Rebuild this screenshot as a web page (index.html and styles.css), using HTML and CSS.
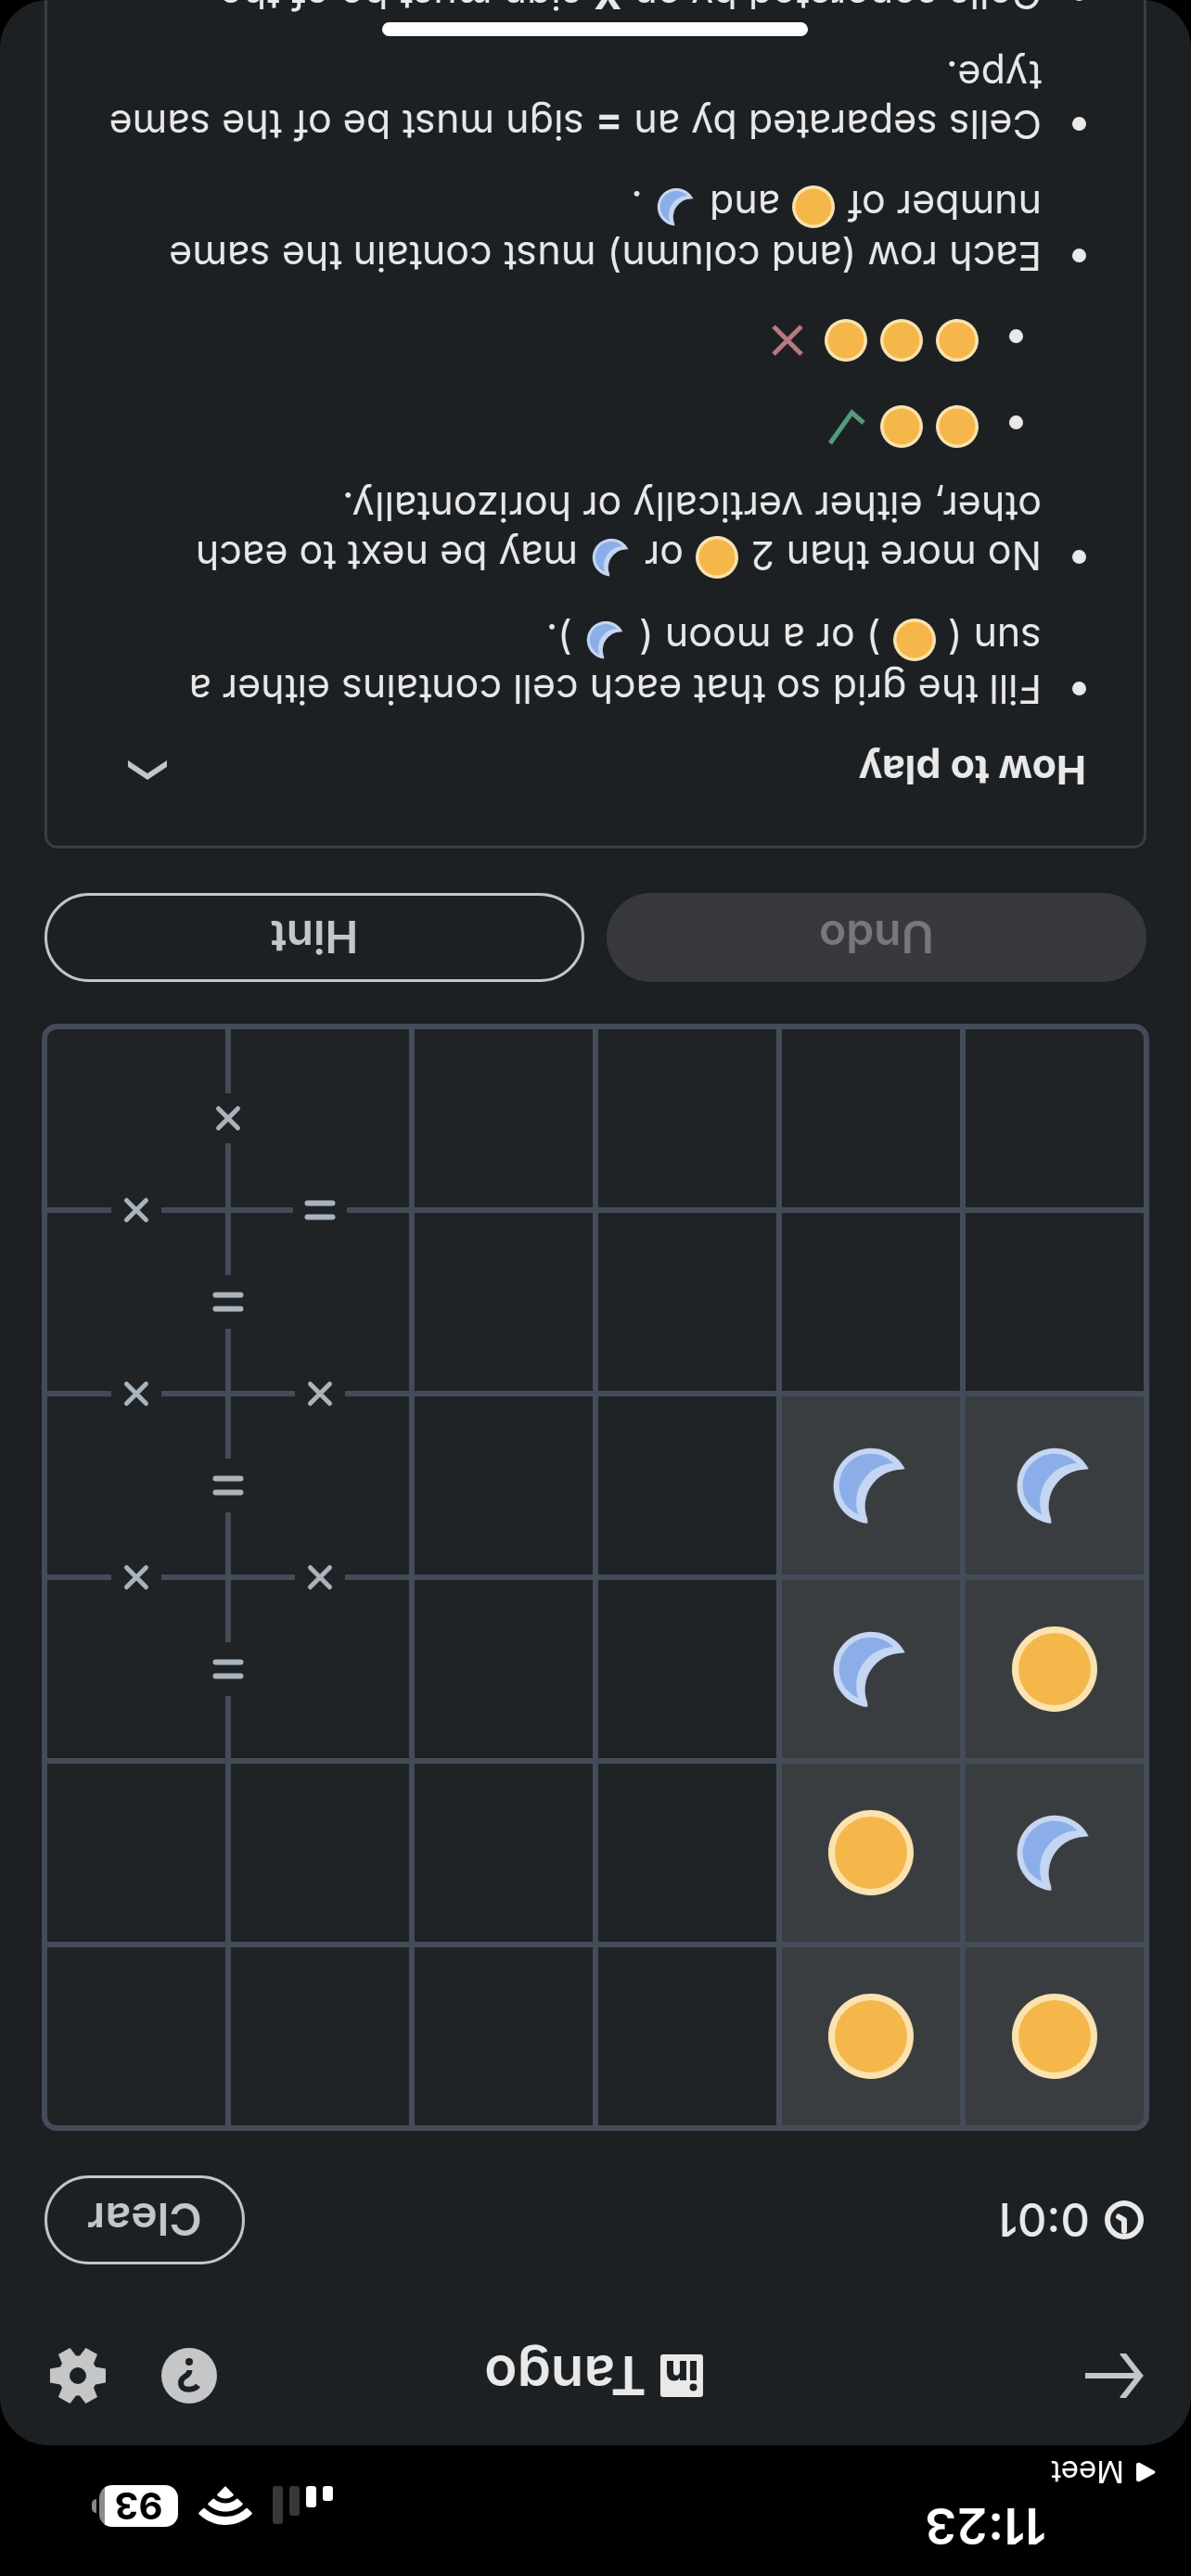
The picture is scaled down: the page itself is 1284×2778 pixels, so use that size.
FILE: index.html
```html
<!DOCTYPE html>
<html lang="en">
<head>
<meta charset="utf-8">
<meta name="viewport" content="width=device-width, initial-scale=1">
<title>Tango</title>
<link rel="stylesheet" href="styles.css">
</head>
<body>
<svg class="sprite" aria-hidden="true">
  <symbol id="sun" viewBox="-46 -46 92 92">
    <circle r="46" class="sun-rim"/><circle r="39" class="sun-disc"/>
  </symbol>
  <symbol id="moon" viewBox="-46 -46 92 92">
    <path class="moon-rim" d="M-36.7 17.7A40.7 40.7 0 1 0 3.7-41V-36.5A39.5 39.5 0 0 1-32 17.2Z"/>
    <path class="moon-body" d="M-24.3 24A34.2 34.2 0 1 0 13.7-31.3A42 42 0 0 1-24.3 24Z"/>
  </symbol>
  <symbol id="cross" viewBox="-27 -27 54 54">
    <path class="sign-line" d="M-10.500-10.500L10.500 10.500M10.500-10.500L-10.500 10.500"/>
  </symbol>
  <symbol id="equal" viewBox="-29 -29 58 58">
    <path class="sign-line sign-thick" d="M-13.500-7.500H13.500M-13.500 7.500H13.500"/>
  </symbol>
</svg>

<div class="screen">
  <div class="status">
    <div class="status-left">
      <time class="status-time">11:23</time>
      <a class="status-back" href="#"><svg viewBox="0 0 21 22" width="21" height="22"><path d="M2 9.200L17.500.800Q21 0 21 3V19Q21 22 17.500 21.200L2 12.800Q-1 11 2 9.200Z"/></svg>Meet</a>
    </div>
    <div class="status-right">
      <svg viewBox="0 0 65 42" width="65" height="42" aria-label="Signal"><rect y="26" width="11" height="16" rx="3"/><rect x="18" y="19" width="11" height="23" rx="3"/><g opacity=".22"><rect x="36" y="10" width="11" height="32" rx="3"/><rect x="54" y="1" width="11" height="41" rx="3"/></g></svg>
      <svg viewBox="0 0 58 42" width="58" height="42" aria-label="Wi-Fi"><path d="M29 0C40 0 50 4.500 57.300 11.500Q58.300 12.500 57.400 13.500L53 17.800Q52 18.600 51 17.700C45 12 37.500 9 29 9S13 12 7 17.700Q6 18.600 5 17.800L.600 13.500Q-.300 12.500.700 11.500C8 4.500 18 0 29 0ZM29 14.500C36 14.500 42.500 17.200 47.300 21.700Q48.300 22.700 47.300 23.600L42.800 28Q41.800 28.900 40.800 28C37.500 25.200 33.500 23.500 29 23.500S20.500 25.200 17.200 28Q16.200 28.900 15.200 28L10.700 23.600Q9.700 22.700 10.700 21.700C15.500 17.200 22 14.500 29 14.500ZM29 28.500C32.200 28.500 35 29.700 37.300 31.600Q38.300 32.500 37.300 33.500L30 41Q29 42 28 41L20.700 33.500Q19.700 32.500 20.700 31.600C23 29.700 25.800 28.500 29 28.500Z"/></svg>
      <span class="battery"><span class="battery-level">93</span></span>
    </div>
  </div>

  <main class="app">
    <header class="topbar">
      <button class="icon-btn back" aria-label="Back"><svg viewBox="0 0 63 48" width="63" height="48"><path class="stroke" d="M3 24H63M23.500-1L4 24L23.500 49"/></svg></button>
      <h1 class="title"><svg viewBox="0 0 46 46" width="46" height="46" aria-label="LinkedIn"><path fill-rule="evenodd" d="M3 0H43Q46 0 46 3V43Q46 46 43 46H3Q0 46 0 43V3Q0 0 3 0ZM7 18V39H14V18ZM10.500 6.500A4 4 0 1 0 10.500 14.500A4 4 0 1 0 10.500 6.500ZM18 18V39H25V28.500C25 25.500 26 23.500 29 23.500S32 26 32 28.500V39H39V26.500C39 20.500 36 17.500 31.300 17.500C28.300 17.500 26.300 18.700 25 20.800V18Z"/></svg>Tango</h1>
      <div class="actions">
        <button class="icon-btn" aria-label="Help"><svg viewBox="-30 -30 60 60" width="60" height="60"><circle r="30"/><path class="hole-line" d="M-9.500-10.500C-6-15.500 9-18 9-7.500C9 0-.500-1.500-.500 6"/><circle class="hole" cy="15" r="4"/></svg></button>
        <button class="icon-btn" aria-label="Settings"><svg viewBox="-30 -30 60 60" width="60" height="60"><path fill-rule="evenodd" d="M-30-7.500V7.500L-19 9.500Q-18 11.500-17 13L-21 23L-8.500 30L-2 21.500H2L8.500 30L21 23L17 13Q18 11.500 19 9.500L30 7.500V-7.500L19-9.500Q18-11.500 17-13L21-23L8.500-30L2-21.500H-2L-8.500-30L-21-23L-17-13Q-18-11.500-19-9.500ZM0-9A9 9 0 1 1 0 9A9 9 0 1 1 0-9Z"/></svg></button>
      </div>
    </header>

    <div class="timer-row">
      <span class="timer"><svg viewBox="-21 -21 42 42" width="42" height="42"><circle class="clock-ring" r="18"/><path class="clock-hand" d="M0-12V0L6 3.500"/></svg>0:01</span>
      <button class="pill clear">Clear</button>
    </div>

    <div class="board">
      <button class="cell given" disabled aria-label="Sun"><svg><use href="#sun"/></svg></button>
      <button class="cell given" disabled aria-label="Sun"><svg><use href="#sun"/></svg></button>
      <button class="cell"></button><button class="cell"></button><button class="cell"></button><button class="cell"></button>

      <button class="cell given" disabled aria-label="Moon"><svg><use href="#moon"/></svg></button>
      <button class="cell given" disabled aria-label="Sun"><svg><use href="#sun"/></svg></button>
      <button class="cell"></button><button class="cell"></button><button class="cell"></button><button class="cell"></button>

      <button class="cell given" disabled aria-label="Sun"><svg><use href="#sun"/></svg></button>
      <button class="cell given" disabled aria-label="Moon"><svg><use href="#moon"/></svg></button>
      <button class="cell"></button><button class="cell"></button>
      <button class="cell"><svg class="sign equal right"><use href="#equal"/></svg><svg class="sign cross below"><use href="#cross"/></svg></button>
      <button class="cell"><svg class="sign cross below"><use href="#cross"/></svg></button>

      <button class="cell given" disabled aria-label="Moon"><svg><use href="#moon"/></svg></button>
      <button class="cell given" disabled aria-label="Moon"><svg><use href="#moon"/></svg></button>
      <button class="cell"></button><button class="cell"></button>
      <button class="cell"><svg class="sign equal right"><use href="#equal"/></svg><svg class="sign cross below"><use href="#cross"/></svg></button>
      <button class="cell"><svg class="sign cross below"><use href="#cross"/></svg></button>

      <button class="cell"></button><button class="cell"></button><button class="cell"></button><button class="cell"></button>
      <button class="cell"><svg class="sign equal right"><use href="#equal"/></svg><svg class="sign equal below"><use href="#equal"/></svg></button>
      <button class="cell"><svg class="sign cross below"><use href="#cross"/></svg></button>

      <button class="cell"></button><button class="cell"></button><button class="cell"></button><button class="cell"></button>
      <button class="cell"><svg class="sign cross right"><use href="#cross"/></svg></button>
      <button class="cell"></button>
    </div>

    <div class="controls">
      <button class="pill undo" disabled>Undo</button>
      <button class="pill">Hint</button>
    </div>

    <details class="rules" open>
      <summary><h2>How to play</h2><svg viewBox="0 0 42 21" width="42" height="21"><path d="M0 21V14L21 0L42 14V21L21 7Z"/></svg></summary>
      <ul class="rule-list">
        <li><div>Fill the grid so that each cell contains either a sun&nbsp;( <svg class="glyph"><use href="#sun"/></svg> ) or a moon ( <svg class="glyph"><use href="#moon"/></svg> ).</div></li>
        <li><div>No more than 2 <svg class="glyph"><use href="#sun"/></svg> or <svg class="glyph"><use href="#moon"/></svg> may be next to each other, either vertically or horizontally.
          <ul class="examples">
            <li><svg class="glyph"><use href="#sun"/></svg><svg class="glyph"><use href="#sun"/></svg><svg class="mark good" viewBox="0 0 46 46"><path d="M4 27L16.500 38L40 5"/></svg></li>
            <li><svg class="glyph"><use href="#sun"/></svg><svg class="glyph"><use href="#sun"/></svg><svg class="glyph"><use href="#sun"/></svg><svg class="mark bad" viewBox="0 0 46 46"><path d="M11 8L41 38M41 8L11 38"/></svg></li>
          </ul></div>
        </li>
        <li><div>Each row (and column) must contain the same number of <svg class="glyph"><use href="#sun"/></svg> and <svg class="glyph"><use href="#moon"/></svg> .</div></li>
        <li><div>Cells separated by an <b>=</b> sign must be of the same type.</div></li>
        <li><div>Cells separated by an <b>X</b> sign must be of the opposite type.</div></li>
      </ul>
    </details>
  </main>
  <div class="home-bar"></div>
</div>
</body>
</html>
```

FILE: styles.css
```css
* { box-sizing: border-box; }

body {
  margin: 0;
  background: #000;
  color: #e9e9ea;
  font-family: Inter, "Liberation Sans", sans-serif;
  font-size: 43px;
  line-height: 53px;
}

h1, h2, ul { margin: 0; padding: 0; font-size: inherit; }
svg { display: block; fill: currentColor; overflow: visible; flex: none; }
button { font: inherit; color: inherit; background: none; border: 0; padding: 0; }
a { color: inherit; text-decoration: none; }
.sprite { position: absolute; width: 0; height: 0; }

.sun-rim { fill: #fae3b0; }
.sun-disc { fill: #f5b74a; }
.moon-rim { fill: #c5d6f2; }
.moon-body { fill: #8caee8; }
.sign-line { fill: none; stroke: #aab4bd; stroke-width: 5; stroke-linecap: round; }
.sign-thick { stroke-width: 6; }

/* The phone is held upside down */
.screen {
  display: flex;
  flex-direction: column;
  height: 100vh;
  overflow: hidden;
  transform: rotate(180deg);
}

/* Status bar */
.status {
  flex: none;
  display: flex;
  justify-content: space-between;
  align-items: flex-start;
  height: 141px;
  padding: 24px 98px 0 38px;
  color: #fff;
}
.status-left { display: flex; flex-direction: column; }
.status-time { margin-left: 118px; font-size: 54px; line-height: 60px; font-weight: 600; }
.status-back {
  display: flex;
  align-items: center;
  gap: 13px;
  font-size: 33px;
  line-height: 56px;
}
.status-right { display: flex; align-items: center; gap: 22px; padding-top: 29px; }
.battery {
  position: relative;
  width: 85px;
  height: 45px;
  margin-right: 9px;
  border-radius: 14px;
  background: linear-gradient(to right, #fff 79px, #8a8a8a 79px);
  color: #000;
}
.battery::after {
  content: "";
  position: absolute;
  left: 88px;
  top: 15px;
  width: 5px;
  height: 15px;
  border-radius: 0 5px 5px 0;
  background: #8a8a8a;
}
.battery-level {
  display: block;
  text-align: center;
  font-size: 40px;
  line-height: 45px;
  font-weight: 700;
}

/* App */
.app {
  flex: 1;
  min-height: 0;
  padding: 45px 48px;
  border-radius: 52px;
  background: #1c2023;
  overflow-y: auto;
  scrollbar-width: none;
}

.topbar { display: grid; grid-template-columns: 1fr auto 1fr; align-items: center; height: 60px; }
.icon-btn { color: #c5c6c8; }
.back { justify-self: start; padding-left: 3px; }
.stroke { fill: none; stroke: #c5c6c8; stroke-width: 6; }
.back svg { overflow: hidden; }
.title {
  display: flex;
  align-items: center;
  gap: 15px;
  padding-left: 4px;
  font-size: 58px;
  line-height: 60px;
  font-weight: 600;
}
.actions { justify-self: end; display: flex; gap: 60px; padding-right: 6px; }
.hole { fill: #1c2023; }
.hole-line { fill: none; stroke: #1c2023; stroke-width: 6; }

.timer-row { display: flex; justify-content: space-between; align-items: center; margin: 90px 0 48px; }
.timer { display: flex; align-items: center; gap: 16px; padding-left: 3px; font-size: 49px; font-weight: 500; }
.clock-ring { fill: none; stroke: #e9e9ea; stroke-width: 6; }
.clock-hand { fill: none; stroke: #e9e9ea; stroke-width: 6; stroke-linecap: round; stroke-linejoin: round; }

.pill {
  height: 96px;
  border: 3px solid #c5c6c8;
  border-radius: 48px;
  color: #c5c6c8;
  font-size: 48px;
  font-weight: 600;
}
.clear { width: 216px; }
.undo { border-color: #38393c; background: #38393c; color: #77787b; }
.controls { display: grid; grid-template-columns: 1fr 1fr; gap: 24px; margin: 45px 0 48px; }

/* Board */
.board {
  display: grid;
  grid-template-columns: repeat(6, 1fr);
  gap: 6px;
  margin: 0 -3px;
  border: 6px solid #434c58;
  border-radius: 16px;
  background: #434c58;
  overflow: hidden;
}
.cell {
  position: relative;
  aspect-ratio: 1;
  display: grid;
  place-items: center;
  background: #1f2326;
}
.given { background: #3a3d3f; }
.given svg { width: 92px; height: 92px; }
.sign { position: absolute; z-index: 1; background: #1f2326; }
.cross { width: 54px; height: 54px; }
.equal { width: 58px; height: 58px; }
.right { left: calc(100% + 3px); top: 50%; transform: translate(-50%, -50%); }
.below { top: calc(100% + 3px); left: 50%; transform: translate(-50%, -50%); }

/* Rules */
.rules {
  padding: 55px 62px 60px;
  border: 3px solid #3b3e41;
  border-radius: 14px;
}
.rules summary {
  display: flex;
  justify-content: space-between;
  align-items: center;
  padding-right: 25px;
  list-style: none;
  font-weight: 600;
}
.rules summary svg { color: #c5c6c8; }
.rule-list { display: flex; flex-direction: column; gap: 34px; margin-top: 34px; list-style: none; }
.rule-list > li { display: grid; grid-template-columns: 15px 1fr; gap: 33px; }
.rule-list li::before {
  content: "";
  width: 15px;
  height: 15px;
  margin-top: 20px;
  border-radius: 50%;
  background: #e9e9ea;
}
.glyph {
  display: inline-block;
  width: 46px;
  height: 46px;
  margin: 4px 1px 0;
  vertical-align: -6px;
}
.examples { display: flex; flex-direction: column; gap: 47px; margin: 37px 0 7px 20px; list-style: none; }
.examples li { display: flex; align-items: center; gap: 14px; }
.examples li::before { margin: 8px 19px 0 0; }
.examples .glyph { margin: 0; }
.mark { width: 46px; height: 46px; fill: none; stroke-width: 5; }
.good { stroke: #559b7c; }
.bad { stroke: #b87981; }

.home-bar {
  position: absolute;
  bottom: 24px;
  left: 50%;
  width: 459px;
  height: 15px;
  margin-left: -229px;
  border-radius: 8px;
  background: #fff;
}
```
